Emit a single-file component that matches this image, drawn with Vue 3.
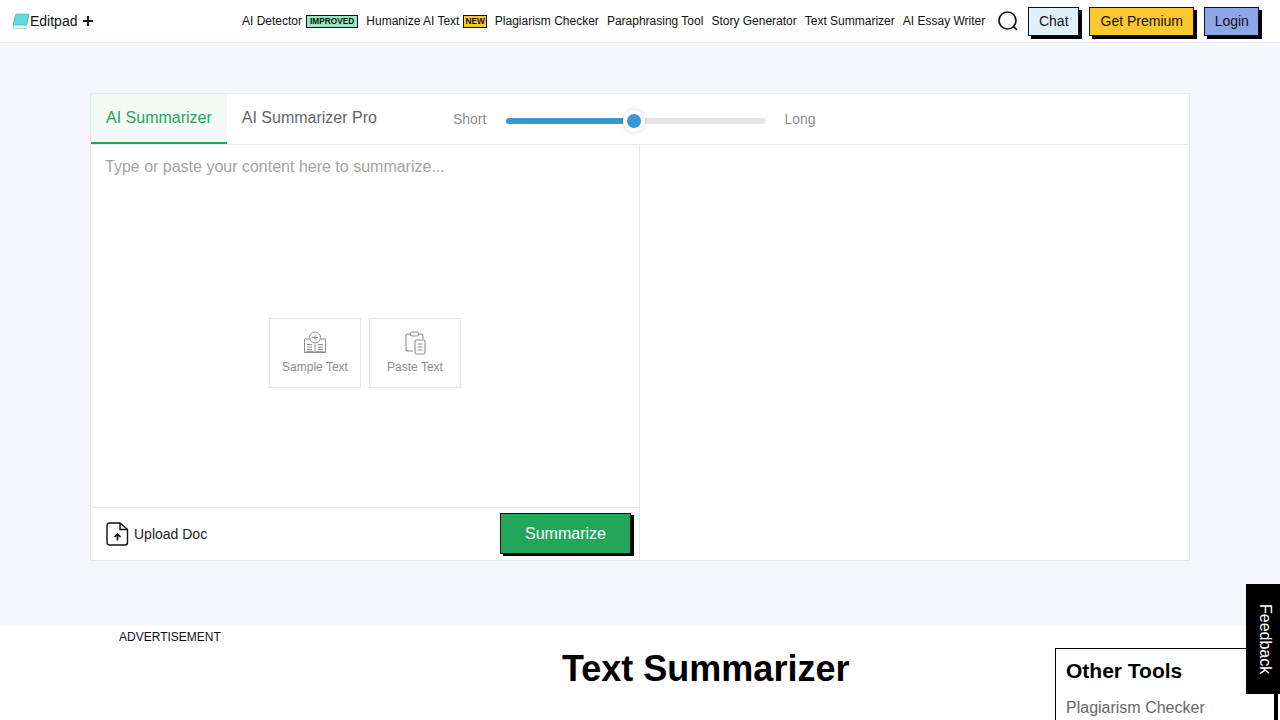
<script setup>
const navItems = [
  { label: 'AI Detector', badge: 'IMPROVED', tone: 'mint' },
  { label: 'Humanize AI Text', badge: 'NEW', tone: 'amber' },
  { label: 'Plagiarism Checker' },
  { label: 'Paraphrasing Tool' },
  { label: 'Story Generator' },
  { label: 'Text Summarizer' },
  { label: 'AI Essay Writer' }
]
</script>

<template>
  <div class="page">
    <header class="topbar">
      <div class="brand">
        <svg class="logo" width="18" height="17" viewBox="0 0 18 17">
          <path d="M3.500 2h13l-2 13.500H1z" fill="#eef8f8" stroke="#a5cfd4" stroke-width=".8" />
          <path d="M4 1h13l-2.400 11H1z" fill="#5fdde3" stroke="#49aebb" stroke-width=".7" />
        </svg>
        <span class="brand-name">Editpad</span>
        <svg class="plus" width="12" height="12" viewBox="0 0 12 12"><path d="M6 1v10M1 6h10" stroke="#111" stroke-width="1.800" /></svg>
      </div>
      <nav class="nav">
        <a v-for="item in navItems" :key="item.label" class="nav-item">
          {{ item.label }}
          <span v-if="item.badge" class="badge" :class="item.tone">{{ item.badge }}</span>
        </a>
      </nav>
      <svg class="search" width="22" height="22" viewBox="0 0 22 22" fill="none" stroke="#111" stroke-width="1.700">
        <circle cx="10.500" cy="10.500" r="8.500" />
        <path d="M16.500 16.500l3.500 3.500" />
      </svg>
      <div class="actions">
        <button class="pop chat">Chat</button>
        <button class="pop premium">Get Premium</button>
        <button class="pop login">Login</button>
      </div>
    </header>

    <main class="hero">
      <section class="tool">
        <div class="tool-head">
          <div class="tab active">AI Summarizer</div>
          <div class="tab">AI Summarizer Pro</div>
          <div class="length">
            <span>Short</span>
            <div class="track"><div class="fill"></div><div class="thumb"></div></div>
            <span>Long</span>
          </div>
        </div>
        <div class="panes">
          <div class="pane-left">
            <div class="input-area">
              <div class="placeholder">Type or paste your content here to summarize...</div>
              <div class="starters">
                <div class="starter">
                  <svg width="26" height="24" viewBox="0 0 26 24" fill="none" stroke="#8d8d8d" stroke-width="1">
                    <circle cx="13" cy="6.500" r="5.500" />
                    <path d="M13 3.500v6M10 6.500h6" />
                    <path d="M7.500 8H2.500v13.500h21V8h-5" />
                    <path d="M2.500 21.500c4-1.500 8-1.500 10.500 0 2.500-1.500 6.500-1.500 10.500 0M13 13v8.500" />
                    <path d="M5 13.500h5M5 16h5M5 18.500h5M16 13.500h5M16 16h5M16 18.500h5" />
                  </svg>
                  <span>Sample Text</span>
                </div>
                <div class="starter">
                  <svg width="26" height="24" viewBox="0 0 26 24" fill="none" stroke="#8d8d8d" stroke-width="1.100">
                    <path d="M9 3H6a2 2 0 0 0-2 2v13a2 2 0 0 0 2 2h5" />
                    <path d="M16 3h3a2 2 0 0 1 2 2v3" />
                    <rect x="8.500" y="1" width="8" height="4" rx="1.800" />
                    <rect x="13" y="9" width="10" height="14" rx="1.500" />
                    <path d="M15.500 13h5M15.500 16h5M15.500 19h5" />
                  </svg>
                  <span>Paste Text</span>
                </div>
              </div>
            </div>
            <div class="pane-foot">
              <div class="upload">
                <svg width="23" height="24" viewBox="0 0 23 24" fill="none" stroke="#111" stroke-width="1.400">
                  <path d="M3.500 1H14l7.500 6.500v13a2.500 2.500 0 0 1-2.500 2.500H3.500A2.500 2.500 0 0 1 1 20.500V3.500A2.500 2.500 0 0 1 3.500 1z" />
                  <path d="M14 1v6.500h7.500" />
                  <path d="M11.500 18.500v-6M8.500 15l3-3 3 3" stroke-width="1.700" />
                </svg>
                <span>Upload Doc</span>
              </div>
              <button class="pop summarize">Summarize</button>
            </div>
          </div>
          <div class="pane-right"></div>
        </div>
      </section>
    </main>

    <section class="below">
      <div class="ad">ADVERTISEMENT</div>
      <h1>Text Summarizer</h1>
      <aside class="others">
        <h2>Other Tools</h2>
        <a>Plagiarism Checker</a>
      </aside>
    </section>

    <button class="feedback">Feedback</button>
  </div>
</template>

<style>
html, body { margin: 0; height: 100%; overflow: hidden; background: #fff; }
</style>

<style scoped>
.page {
  height: 720px;
  overflow: hidden;
  font-family: "Liberation Sans", Arial, sans-serif;
  color: #111;
  background: #fff;
}
.topbar {
  height: 42px;
  box-sizing: content-box;
  border-bottom: 1px solid #e8eaee;
  display: flex;
  align-items: center;
  background: #fff;
  padding: 0 8px 0 12px;
}
.brand { display: flex; align-items: center; width: 222px; flex: none; }
.logo { flex: none; }
.brand-name { font-size: 14px; }
.plus { margin-left: 5px; }
.nav { display: flex; align-items: center; gap: 8px; flex: none; margin-left: 8px; }
.nav-item { font-size: 12px; color: #111; white-space: nowrap; display: flex; align-items: center; gap: 4px; }
.badge {
  font-size: 8.300px;
  font-weight: 700;
  line-height: 11px;
  padding: 0 3px;
  border: 1px solid #111;
  box-sizing: content-box;
}
.mint { background: #98e8c4; }
.amber { background: #fcc82c; padding: 0 1px; }
.search { flex: none; margin-left: 12px; }
.actions { display: flex; gap: 10px; margin-left: 9px; }
.pop {
  font-family: inherit;
  font-size: 14px;
  color: #111;
  height: 29px;
  padding: 0;
  border: 1px solid #111;
  box-shadow: 3px 3px 0 #000;
  cursor: pointer;
}
.chat { width: 51px; background: #e0f0fb; }
.premium { width: 105px; background: #fdc72f; }
.login { width: 55px; background: #8fa5ea; }
.hero { background: #f5f7fc; height: 582px; padding: 50px 90px 0; box-sizing: border-box; }
.tool {
  width: 1100px;
  height: 468px;
  box-sizing: border-box;
  background: #fff;
  border: 1px solid #e6e8eb;
  display: flex;
  flex-direction: column;
}
.tool-head { height: 51px; flex: none; display: flex; border-bottom: 1px solid #e6e8eb; box-sizing: border-box; }
.tab { font-size: 16px; color: #666; line-height: 47px; padding: 0 15px; height: 50px; box-sizing: border-box; }
.tab.active { color: #22a65a; background: #f3faf6; border-bottom: 2px solid #22a65a; }
.length { display: flex; align-items: center; color: #8c8c8c; font-size: 14px; margin-left: 61px; height: 50px; }
.length span { line-height: 50px; }
.track { width: 260px; height: 6px; background: #e6e6e6; border-radius: 3px; position: relative; margin: 4px 18.500px 0 19.500px; }
.fill { width: 128px; height: 6px; background: #3a97d4; border-radius: 3px; }
.thumb {
  position: absolute;
  left: 121px;
  top: -4px;
  width: 14px;
  height: 14px;
  border-radius: 50%;
  background: #3a97d4;
  box-shadow: 0 0 0 4px #fff, 0 0 5px 4px rgba(0, 0, 0, .15);
}
.panes { flex: 1; display: flex; min-height: 0; }
.pane-left { width: 548px; flex: none; border-right: 1px solid #e6e8eb; display: flex; flex-direction: column; }
.pane-right { flex: 1; }
.input-area { flex: 1; position: relative; padding: 13px 14px; box-sizing: border-box; }
.placeholder { font-size: 16px; line-height: 18px; color: #a3a3a3; }
.starters { position: absolute; left: 178px; top: 173px; display: flex; gap: 8px; }
.starter {
  width: 92px;
  height: 70px;
  box-sizing: border-box;
  border: 1px solid #e6e6e6;
  display: flex;
  flex-direction: column;
  align-items: center;
  padding-top: 12px;
  color: #8d8d8d;
  font-size: 12px;
}
.starter span { margin-top: 5px; }
.pane-foot {
  height: 53px;
  flex: none;
  border-top: 1px solid #e6e8eb;
  display: flex;
  align-items: center;
  justify-content: space-between;
  padding: 0 8px 0 15px;
  box-sizing: border-box;
}
.upload { display: flex; align-items: center; gap: 5px; font-size: 14px; color: #222; }
.summarize { width: 131px; height: 41px; background: #22a65a; color: #fff; font-size: 16px; margin-top: -1px; box-shadow: 3px 2px 0 #000; }
.below { position: relative; height: 95px; background: #fff; display: flex; }
.ad { position: absolute; left: 119px; top: 5px; font-size: 12px; line-height: 15px; color: #111; }
h1 { margin: 24px 0 0 562px; font-size: 36px; line-height: 40px; font-weight: 700; color: #000; white-space: nowrap; }
.others {
  position: absolute;
  left: 1055px;
  top: 23px;
  width: 220px;
  height: 120px;
  border: 1px solid #000;
  box-shadow: 3px 0 0 #000;
  padding: 10px;
  box-sizing: border-box;
  background: #fff;
}
.others h2 { margin: 0 0 15px; font-size: 21px; line-height: 24px; color: #000; }
.others a { font-size: 16px; color: #666; line-height: 20px; display: block; }
.feedback {
  position: fixed;
  right: 0;
  top: 584px;
  width: 34px;
  height: 110px;
  background: #000;
  color: #fff;
  border: 0;
  padding: 0 0 0 4px;
  font-family: inherit;
  font-size: 16px;
  writing-mode: vertical-rl;
  text-align: center;
}
</style>
